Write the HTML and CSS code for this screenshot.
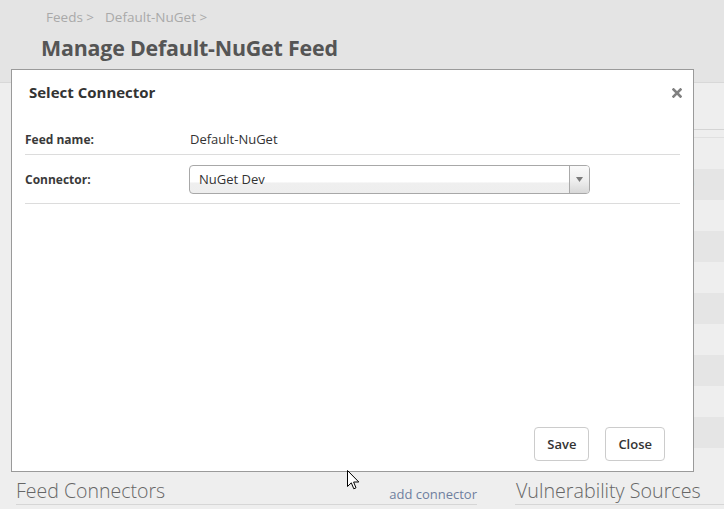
FILE: index.html
```html
<!DOCTYPE html>
<html>
<head>
<meta charset="utf-8">
<link rel="stylesheet" href="styles.css">
</head>
<body>
<div class="page">
  <header class="page-head">
    <nav class="crumbs"><span>Feeds &gt;</span><span>Default-NuGet &gt;</span></nav>
    <h1 class="page-title">Manage Default-NuGet Feed</h1>
  </header>
  <main class="content">
    <section class="col-left"></section>
    <section class="col-right">
      <div class="tbl-head"></div>
      <div class="tbl-sub"></div>
      <div class="tbl-row"></div>
      <div class="tbl-row alt"><span class="peek">)</span></div>
      <div class="tbl-row"></div>
      <div class="tbl-row alt"></div>
      <div class="tbl-row"></div>
      <div class="tbl-row alt"></div>
      <div class="tbl-row"></div>
      <div class="tbl-row alt"></div>
      <div class="tbl-row"></div>
      <div class="tbl-row alt"></div>
    </section>
  </main>
  <div class="sections">
    <div class="sec-head"><h2>Feed Connectors</h2><a class="sec-link">add connector</a></div>
    <div class="sec-head"><h2>Vulnerability Sources</h2></div>
  </div>
</div>

<div class="modal">
  <div class="modal-head">
    <h3>Select Connector</h3>
    <svg class="x" width="10" height="10" viewBox="0 0 10 10"><path d="M1.5 1.5 L8.5 8.5 M8.5 1.5 L1.5 8.5" stroke="#808080" stroke-width="2.6" stroke-linecap="square"/></svg>
  </div>
  <div class="modal-body">
    <div class="form-row first">
      <label class="lbl">Feed name:</label>
      <span class="val">Default-NuGet</span>
    </div>
    <div class="form-row second">
      <label class="lbl">Connector:</label>
      <div class="select">
        <span class="sel-text">NuGet Dev</span>
        <span class="sel-arrow"><svg width="7" height="5" viewBox="0 0 7 5"><path d="M0 0 H7 L3.5 5 Z" fill="#7a7a7a"/></svg></span>
      </div>
    </div>
  </div>
  <div class="modal-foot">
    <button class="btn">Save</button>
    <button class="btn">Close</button>
  </div>
</div>

<svg class="cursor" width="13" height="21" viewBox="0 0 13 21"><path d="M0.5 0.5 V16.5 L4.3 12.8 L6.8 18.8 L9 17.8 L6.6 12 H11.8 Z" fill="#fff" stroke="#000" stroke-width="1" stroke-linejoin="miter"/></svg>
</body>
</html>
```
FILE: styles.css
```css
* { box-sizing: border-box; }
html, body { margin: 0; padding: 0; }
body {
  width: 724px;
  height: 509px;
  overflow: hidden;
  background: #eeeeee;
  font-family: "Open Sans", "Noto Sans", sans-serif;
  color: #333;
  position: relative;
}
.page-head {
  height: 83px;
  background: #e4e4e4;
  border-bottom: 1px solid #d8d8d8;
  padding: 8px 0 0 41px;
}
.crumbs {
  font-size: 13.5px;
  color: #a9a9a9;
  padding-left: 5px;
  line-height: 18px;
  display: flex;
  gap: 11px;
}
.page-title {
  margin: 8px 0 0;
  font-size: 21.4px;
  line-height: 28px;
  font-weight: 700;
  color: #555;
  letter-spacing: -0.2px;
}
.content {
  display: grid;
  grid-template-columns: 461px 1fr;
  gap: 38px;
  padding-left: 16px;
  height: 392px;
}
.col-right { overflow: hidden; }
.tbl-head { height: 47px; border-bottom: 1px solid #d4d4d4; }
.tbl-sub { height: 8px; border-bottom: 1px solid #e0e0e0; }
.tbl-row { height: 31px; background: #eeeeee; position: relative; }
.tbl-row.alt { background: #e5e5e5; }
.peek {
  position: absolute;
  left: 175px;
  top: 3px;
  font-size: 14px;
  color: #5b6fb0;
}
.sections {
  display: grid;
  grid-template-columns: 461px 1fr;
  gap: 38px;
  padding-left: 16px;
}
.sec-head {
  display: flex;
  justify-content: space-between;
  align-items: flex-end;
  border-bottom: 1px solid #d6d6d6;
  height: 30px;
}
.sec-head h2 {
  margin: 0;
  font-size: 19.5px;
  font-weight: 300;
  color: #666;
  line-height: 27px;
}
.sections .sec-head:last-child h2 { padding-left: 1px; font-size: 19.7px; }
.sec-link {
  font-size: 13px;
  color: #6f7f9e;
  line-height: 20px;
}

/* modal */
.modal {
  position: absolute;
  left: 11px;
  top: 69px;
  width: 683px;
  height: 403px;
  background: #fff;
  border: 1px solid #9a9a9a;
  display: flex;
  flex-direction: column;
}
.modal-head {
  display: flex;
  justify-content: space-between;
  align-items: center;
  padding: 12px 11px 13px 17px;
}
.modal-head h3 {
  margin: 0;
  font-size: 15px;
  font-weight: 700;
  line-height: 20px;
  color: #333;
}
.modal-head .x { margin-top: 1px; }
.modal-body {
  flex: 1;
  padding: 9px 13px 0;
}
.form-row {
  display: flex;
  align-items: center;
  border-bottom: 1px solid #dcdcdc;
}
.form-row.first { height: 31px; }
.form-row.second { height: 49px; }
.lbl {
  width: 164px;
  font-size: 12px;
  font-weight: 700;
  color: #3a3a3a;
}
.val {
  padding-left: 1px;
  font-size: 13px;
  color: #333;
}
.select {
  width: 401px;
  height: 29px;
  border: 1px solid #a8a8a8;
  border-radius: 4px;
  background: linear-gradient(#fff 0, #fff 60%, #efefef 62%, #eeeeee 100%);
  display: flex;
  justify-content: space-between;
  align-items: center;
  overflow: hidden;
}
.sel-text {
  padding-left: 9px;
  font-size: 13px;
  color: #333;
}
.sel-arrow {
  width: 20px;
  height: 100%;
  border-left: 1px solid #aaaaaa;
  background: linear-gradient(#fafafa 0, #eeeeee 55%, #d8d8d8 100%);
  display: flex;
  align-items: center;
  justify-content: center;
}
.modal-foot {
  display: flex;
  justify-content: flex-end;
  gap: 16px;
  padding: 0 28px 10px;
}
.btn {
  font-family: "Open Sans", "Noto Sans", sans-serif;
  font-size: 13px;
  font-weight: 600;
  color: #333;
  background: #fff;
  border: 1px solid #cccccc;
  border-radius: 4px;
  height: 34px;
  padding: 0 12px;
}
.cursor {
  position: absolute;
  left: 347px;
  top: 470px;
}
```
